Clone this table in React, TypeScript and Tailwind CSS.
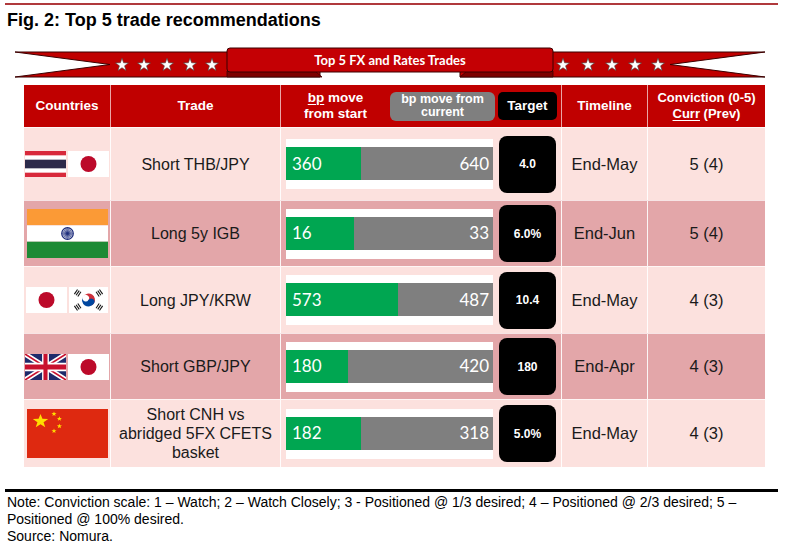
import React from 'react';

type Row = {
  flags: string[];
  trade: string[];
  start: number;
  current: number;
  target: string;
  timeline: string;
  conviction: string;
  dark: boolean;
  height: string;
};

const rows: Row[] = [
  { flags: ['th', 'jp'], trade: ['Short THB/JPY'], start: 360, current: 640, target: '4.0', timeline: 'End-May', conviction: '5 (4)', dark: false, height: 'h-[73px]' },
  { flags: ['in'], trade: ['Long 5y IGB'], start: 16, current: 33, target: '6.0%', timeline: 'End-Jun', conviction: '5 (4)', dark: true, height: 'h-[66px]' },
  { flags: ['jp', 'kr'], trade: ['Long JPY/KRW'], start: 573, current: 487, target: '10.4', timeline: 'End-May', conviction: '4 (3)', dark: false, height: 'h-[67px]' },
  { flags: ['uk', 'jp'], trade: ['Short GBP/JPY'], start: 180, current: 420, target: '180', timeline: 'End-Apr', conviction: '4 (3)', dark: true, height: 'h-[66px]' },
  { flags: ['cn'], trade: ['Short CNH vs', 'abridged 5FX CFETS', 'basket'], start: 182, current: 318, target: '5.0%', timeline: 'End-May', conviction: '4 (3)', dark: false, height: 'h-[68px]' },
];

// five-pointed star as polygon points
const star = (cx: number, cy: number, r: number) => {
  const pts: string[] = [];
  for (let i = 0; i < 10; i++) {
    const a = ((-90 + i * 36) * Math.PI) / 180;
    const rr = i % 2 ? r * 0.4 : r;
    pts.push(`${(cx + rr * Math.cos(a)).toFixed(2)},${(cy + rr * Math.sin(a)).toFixed(2)}`);
  }
  return pts.join(' ');
};

const Flag: React.FC<{ code: string }> = ({ code }) => {
  if (code === 'th') {
    return (
      <svg className="w-[41px] h-[26px] block" viewBox="0 0 9 6" preserveAspectRatio="none">
        <rect width="9" height="6" fill="#ffffff" />
        <rect y="0" width="9" height="1" fill="#d8293b" />
        <rect y="2" width="9" height="2" fill="#2d2a4a" />
        <rect y="5" width="9" height="1" fill="#d8293b" />
      </svg>
    );
  }
  if (code === 'jp') {
    return (
      <svg className="w-[41px] h-[26px] block" viewBox="0 0 41 26">
        <rect width="41" height="26" fill="#ffffff" />
        <circle cx="20.5" cy="13" r="8" fill="#bc0a2a" />
      </svg>
    );
  }
  if (code === 'kr') {
    const bars = (
      <g>
        <rect x="-2.6" y="-2.4" width="5.2" height="1" fill="#111" />
        <rect x="-2.6" y="-0.5" width="5.2" height="1" fill="#111" />
        <rect x="-2.6" y="1.4" width="5.2" height="1" fill="#111" />
      </g>
    );
    return (
      <svg className="w-[39px] h-[26px] block" viewBox="0 0 36 24">
        <rect width="36" height="24" fill="#ffffff" />
        <g transform="rotate(33.7 18 12)">
          <path d="M12,12 A6,6 0 0 1 24,12 A3,3 0 0 1 18,12 A3,3 0 0 0 12,12 Z" fill="#cd2e3a" />
          <path d="M12,12 A6,6 0 0 0 24,12 A3,3 0 0 0 18,12 A3,3 0 0 1 12,12 Z" fill="#0047a0" />
        </g>
        <g transform="translate(8 5.5) rotate(-56.3)">{bars}</g>
        <g transform="translate(28 5.5) rotate(56.3)">{bars}</g>
        <g transform="translate(8 18.5) rotate(56.3)">{bars}</g>
        <g transform="translate(28 18.5) rotate(-56.3)">{bars}</g>
      </svg>
    );
  }
  if (code === 'uk') {
    return (
      <svg className="w-[41px] h-[26px] block" viewBox="0 0 60 30" preserveAspectRatio="none">
        <rect width="60" height="30" fill="#1f2a6b" />
        <path d="M0,0 L60,30 M60,0 L0,30" stroke="#ffffff" strokeWidth="6" />
        <path d="M0,0 L60,30 M60,0 L0,30" stroke="#c8102e" strokeWidth="2" />
        <path d="M30,0 V30 M0,15 H60" stroke="#ffffff" strokeWidth="10" />
        <path d="M30,0 V30 M0,15 H60" stroke="#c8102e" strokeWidth="6" />
      </svg>
    );
  }
  if (code === 'in') {
    const spokes = Array.from({ length: 12 }, (_, i) => i * 15);
    return (
      <svg className="w-[81px] h-[49px] block" viewBox="0 0 81 49">
        <rect width="81" height="16.3" fill="#fb9a36" />
        <rect y="16.3" width="81" height="16.4" fill="#ffffff" />
        <rect y="32.7" width="81" height="16.3" fill="#1d8a35" />
        <circle cx="40.5" cy="24.5" r="5.8" fill="none" stroke="#1b2a7a" strokeWidth="1.2" />
        {spokes.map((a) => (
          <line key={a} x1="40.5" y1="19" x2="40.5" y2="30" stroke="#1b2a7a" strokeWidth="0.6" transform={`rotate(${a} 40.5 24.5)`} />
        ))}
      </svg>
    );
  }
  // china
  return (
    <svg className="w-[81px] h-[49px] block" viewBox="0 0 30 20" preserveAspectRatio="none">
      <rect width="30" height="20" fill="#de2910" />
      <polygon points={star(5, 5, 3)} fill="#ffde00" />
      <polygon points={star(10, 2, 1)} fill="#ffde00" />
      <polygon points={star(12, 4, 1)} fill="#ffde00" />
      <polygon points={star(12, 7, 1)} fill="#ffde00" />
      <polygon points={star(10, 9, 1)} fill="#ffde00" />
    </svg>
  );
};

const Banner: React.FC = () => {
  const leftStars = [107, 129, 152, 175, 197];
  const rightStars = [548, 573, 597, 620, 643];
  return (
    <svg className="block ml-[15px] mt-[15px]" width="752" height="34" viewBox="0 0 752 34">
      <polygon points="0,6 305,6 305,31 0,31 95,18.5" fill="#c00000" stroke="#3b0000" strokeWidth="1" />
      <polygon points="445,6 750,6 655,18.5 750,31 445,31" fill="#c00000" stroke="#3b0000" strokeWidth="1" />
      <polygon points="212,25 300,25 307,31 212,31" fill="#7d0000" stroke="#3b0000" strokeWidth="0.8" />
      <polygon points="445,31 452,25 538,25 538,31" fill="#7d0000" stroke="#3b0000" strokeWidth="0.8" />
      {leftStars.map((x) => (
        <polygon key={x} points={star(x, 19, 6.8)} fill="#ffffff" stroke="#444" strokeWidth="0.6" />
      ))}
      {rightStars.map((x) => (
        <polygon key={x} points={star(x, 19, 6.8)} fill="#ffffff" stroke="#444" strokeWidth="0.6" />
      ))}
      <rect x="212" y="2" width="326" height="24" rx="3" fill="#c40004" stroke="#3b0000" strokeWidth="1" />
      <text x="375" y="18.5" textAnchor="middle" fill="#ffffff" fontFamily="Lato, sans-serif" fontWeight="700" fontSize="13">
        Top 5 FX and Rates Trades
      </text>
    </svg>
  );
};

export default function App() {
  return (
    <div className="w-[800px] h-[560px] bg-white overflow-hidden font-['Liberation_Sans',Arial,sans-serif] text-[#1a1a1a]">
      <div className="ml-[5px] pt-[3px]">
        <div className="w-[773px] h-[2px] bg-[#b0393c]"></div>
      </div>
      <h1 className="ml-[7px] mt-[4px] text-[18px] leading-[22px] font-bold text-black">Fig. 2: Top 5 trade recommendations</h1>

      <Banner />

      <div className="ml-[24px] mt-[5px] w-[741px]">
        {/* header */}
        <div className="flex h-[42px] bg-[#c00000] text-white font-bold text-[13.5px] leading-[16px]">
          <div className="w-[87px] flex items-center justify-center border-r border-[#eaa6a6]">Countries</div>
          <div className="w-[170px] flex items-center justify-center border-r border-[#eaa6a6]">Trade</div>
          <div className="w-[281px] flex items-center border-r border-[#eaa6a6]">
            <div className="w-[109px] text-center">
              <span className="underline decoration-1 underline-offset-2">bp</span> move
              <br />
              from start
            </div>
            <div className="w-[105px] h-[29px] rounded-[6px] bg-[#7f7f7f] flex items-center justify-center text-center text-[12.5px] leading-[13px]">
              bp move from
              <br />
              current
            </div>
            <div className="ml-[3px] w-[59px] h-[28px] rounded-[5px] bg-black flex items-center justify-center text-[13.5px]">Target</div>
          </div>
          <div className="w-[86px] flex items-center justify-center border-r border-[#eaa6a6]">Timeline</div>
          <div className="w-[117px] flex items-center justify-center text-center text-[13px] leading-[16px]">
            <div>
              Conviction (0-5)
              <br />
              <span className="underline decoration-1 underline-offset-2">Curr</span> (Prev)
            </div>
          </div>
        </div>

        {/* body */}
        {rows.map((r, i) => {
          const pct = (r.start / (r.start + r.current)) * 100;
          return (
            <div
              key={i}
              className={`flex ${r.height} border-t border-white/70 ${r.dark ? 'bg-[#e3a6a9]' : 'bg-[#fce1de]'}`}
            >
              <div className="w-[87px] flex items-center justify-center gap-[2px] border-r border-white/90">
                {r.flags.map((f) => (
                  <Flag key={f} code={f} />
                ))}
              </div>
              <div className="w-[170px] flex items-center justify-center text-center text-[16px] leading-[19px] border-r border-white/90">
                <div>
                  {r.trade.map((t) => (
                    <div key={t}>{t}</div>
                  ))}
                </div>
              </div>
              <div className="w-[281px] flex items-center pl-[5px] border-r border-white/90">
                <div className="w-[207px] h-[50px] bg-white pt-[8px]">
                  <div className="flex h-[33px] font-['Lato',sans-serif] text-[17px] text-white">
                    <div className="bg-[#00a651] flex items-center pl-[6px]" style={{ width: `${pct}%` }}>
                      {r.start}
                    </div>
                    <div className="flex-1 bg-[#7f7f7f] flex items-center justify-end pr-[4px]">{r.current}</div>
                  </div>
                </div>
                <div className="ml-[6px] w-[57px] h-[57px] rounded-[8px] bg-black flex items-center justify-center text-white font-bold text-[12px]">
                  {r.target}
                </div>
              </div>
              <div className="w-[86px] flex items-center justify-center text-[16.5px] border-r border-white/90">{r.timeline}</div>
              <div className="w-[117px] flex items-center justify-center text-[16.5px]">{r.conviction}</div>
            </div>
          );
        })}
      </div>

      <div className="ml-[5px] mt-[22px] w-[773px] h-[3px] bg-black"></div>
      <div className="ml-[7px] mt-[2px] text-[14px] leading-[17px] text-black">
        <p>
          Note: Conviction scale: 1 – Watch; 2 – Watch Closely; 3 - Positioned @ 1/3 desired; 4 – Positioned @ 2/3 desired; 5 –
          <br />
          Positioned @ 100% desired.
        </p>
        <p>Source: Nomura.</p>
      </div>
    </div>
  );
}
